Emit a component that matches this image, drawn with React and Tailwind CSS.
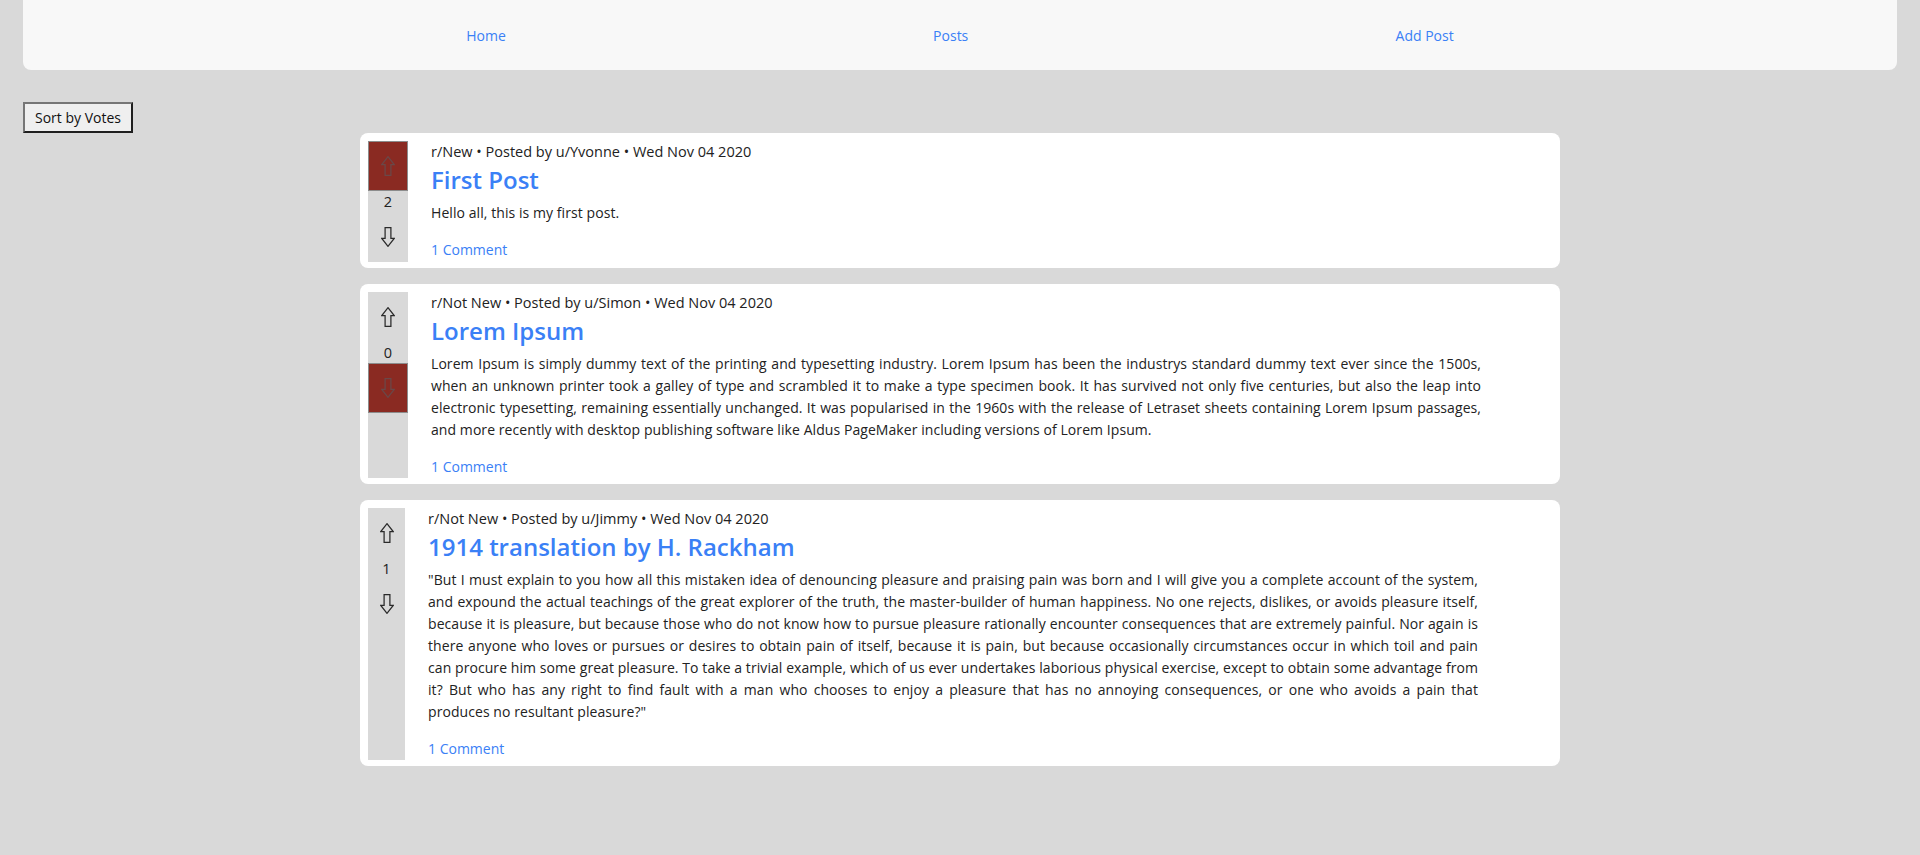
import { useState } from 'react'

const FONT = { fontFamily: '"Open Sans", "Noto Sans", sans-serif' }

const initialPosts = [
  {
    id: 1,
    sub: 'New',
    author: 'Yvonne',
    date: 'Wed Nov 04 2020',
    title: 'First Post',
    body: 'Hello all, this is my first post.',
    votes: 2,
    vote: 'up',
    comments: 1,
  },
  {
    id: 2,
    sub: 'Not New',
    author: 'Simon',
    date: 'Wed Nov 04 2020',
    title: 'Lorem Ipsum',
    body: 'Lorem Ipsum is simply dummy text of the printing and typesetting industry. Lorem Ipsum has been the industrys standard dummy text ever since the 1500s, when an unknown printer took a galley of type and scrambled it to make a type specimen book. It has survived not only five centuries, but also the leap into electronic typesetting, remaining essentially unchanged. It was popularised in the 1960s with the release of Letraset sheets containing Lorem Ipsum passages, and more recently with desktop publishing software like Aldus PageMaker including versions of Lorem Ipsum.',
    votes: 0,
    vote: 'down',
    comments: 1,
  },
  {
    id: 3,
    sub: 'Not New',
    author: 'Jimmy',
    date: 'Wed Nov 04 2020',
    title: '1914 translation by H. Rackham',
    body: '"But I must explain to you how all this mistaken idea of denouncing pleasure and praising pain was born and I will give you a complete account of the system, and expound the actual teachings of the great explorer of the truth, the master-builder of human happiness. No one rejects, dislikes, or avoids pleasure itself, because it is pleasure, but because those who do not know how to pursue pleasure rationally encounter consequences that are extremely painful. Nor again is there anyone who loves or pursues or desires to obtain pain of itself, because it is pain, but because occasionally circumstances occur in which toil and pain can procure him some great pleasure. To take a trivial example, which of us ever undertakes laborious physical exercise, except to obtain some advantage from it? But who has any right to find fault with a man who chooses to enjoy a pleasure that has no annoying consequences, or one who avoids a pain that produces\u00a0no resultant pleasure?"',
    votes: 1,
    vote: null,
    comments: 1,
  },
]

function Arrow({ down, active }) {
  return (
    <svg
      width="14"
      height="20"
      viewBox="0 0 14 20"
      className={down ? 'rotate-180' : ''}
    >
      <path
        d="M7 0.7 L13.2 8.6 H9.9 V19.3 H4.1 V8.6 H0.8 Z"
        fill="none"
        stroke={active ? '#6a4848' : '#2a2a2a'}
        strokeWidth="1.25"
        strokeLinejoin="miter"
      />
    </svg>
  )
}

function VoteButton({ down, active, onClick }) {
  return (
    <button
      onClick={onClick}
      className={`flex h-[50px] w-full items-center justify-center ${
        active ? 'border border-[#8c8c8c] bg-[#8a2a22]' : ''
      }`}
    >
      <Arrow down={down} active={active} />
    </button>
  )
}

function Post({ post, onVote }) {
  return (
    <div className="flex rounded-lg bg-white px-2 pt-2 pb-[6px]">
      <div
        className={`flex shrink-0 flex-col bg-[#d9d9d9] ${
          post.vote ? 'w-[40px]' : 'w-[37px]'
        }`}
      >
        <VoteButton active={post.vote === 'up'} onClick={() => onVote(post.id, 'up')} />
        <div className="h-[21px] text-center text-[14.5px] leading-[21px] text-[#222]">
          {post.votes}
        </div>
        <VoteButton down active={post.vote === 'down'} onClick={() => onVote(post.id, 'down')} />
      </div>

      <div className="ml-[23px] w-[1050px]">
        <div className="text-[14.5px] leading-[22px] text-[#222]">
          r/{post.sub} • Posted by u/{post.author} • {post.date}
        </div>
        <h2 className="text-[24px] leading-[34px] font-semibold text-[#3a80f6]">{post.title}</h2>
        <p className="mt-[5px] text-justify text-[14px] leading-[22px] tracking-[0.07px] text-[#222]">
          {post.body}
        </p>
        <a href="#" className="mt-[15px] block text-[14px] leading-[22px] text-[#3a80f6]">
          {post.comments} Comment
        </a>
      </div>
    </div>
  )
}

export default function App() {
  const [posts, setPosts] = useState(initialPosts)

  const handleVote = (id, dir) => {
    setPosts((prev) =>
      prev.map((p) => {
        if (p.id !== id) return p
        if (p.vote === dir) {
          return { ...p, vote: null, votes: p.votes + (dir === 'up' ? -1 : 1) }
        }
        let delta = dir === 'up' ? 1 : -1
        if (p.vote) delta *= 2
        return { ...p, vote: dir, votes: p.votes + delta }
      })
    )
  }

  const sortByVotes = () => {
    setPosts((prev) => [...prev].sort((a, b) => b.votes - a.votes))
  }

  return (
    <div className="min-h-[855px] bg-[#d9d9d9] px-[23px] pb-10" style={FONT}>
      <nav className="flex h-[70px] items-center justify-evenly rounded-b-lg bg-[#f8f8f8] px-4 text-[14px]">
        <a href="#" className="text-[#3a80f6]">Home</a>
        <a href="#" className="text-[#3a80f6]">Posts</a>
        <a href="#" className="text-[#3a80f6]">Add Post</a>
      </nav>

      <button
        onClick={sortByVotes}
        className="mt-8 border-2 border-t-[#767676] border-r-[#1f1f1f] border-b-[#1f1f1f] border-l-[#767676] bg-[#efefef] px-[10px] py-[4px] text-[14px] leading-[19px] text-[#111]"
      >
        Sort by Votes
      </button>

      <div className="mx-auto flex w-[1200px] flex-col gap-4">
        {posts.map((post) => (
          <Post key={post.id} post={post} onVote={handleVote} />
        ))}
      </div>
    </div>
  )
}
